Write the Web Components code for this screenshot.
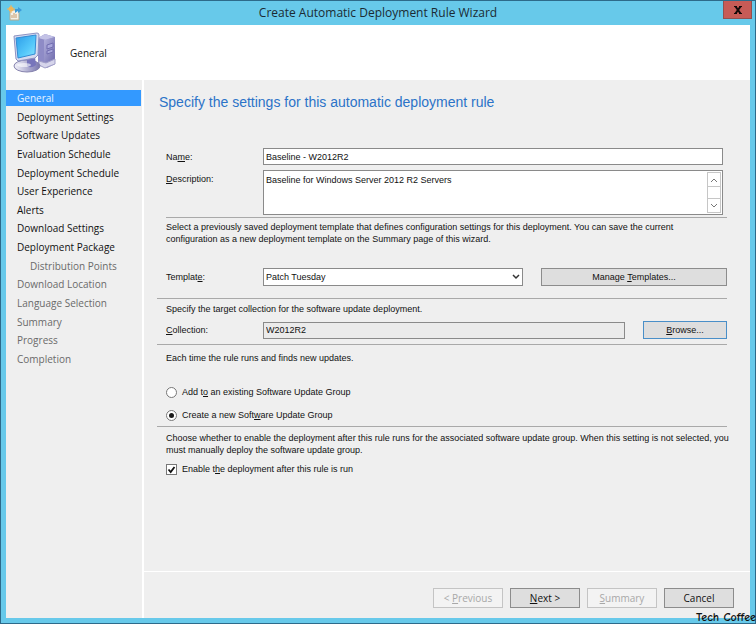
<!DOCTYPE html>
<html lang="en">
<head>
<meta charset="utf-8">
<title>Create Automatic Deployment Rule Wizard</title>
<style>
    body {
        margin: 0;
        min-height: 100vh;
        display: flex;
        font: 9px/12px "Liberation Sans", Arial, sans-serif;
        color: #111;
    }
    u {
        text-underline-offset: 1px;
    }
    p {
        margin: 0;
        white-space: nowrap;
    }
    .watermark {
        position: absolute;
        right: 0;
        bottom: 1px;
        font: 600 12px/12px "Comic Neue", Lato, sans-serif;
        color: #111;
    }
</style>
</head>
<body>

<template id="template-wizard-window">
    <style>
        :host {
            flex: 1;
            display: flex;
            flex-direction: column;
            border: 1px solid #2d6a8a;
            background: #67c9ea;
            box-sizing: border-box;
            min-width: 0;
            min-height: 100vh;
        }
        .titlebar {
            display: grid;
            grid-template-columns: 40px 1fr 40px;
            height: 24px;
        }
        .titlebar svg {
            margin: 4px 0 0 6px;
        }
        h1 {
            margin: 0;
            font: 12px/24px "Open Sans", sans-serif;
            text-align: center;
            color: #1b2b33;
        }
        .close {
            justify-self: end;
            width: 29px;
            height: 18px;
            margin-right: 3px;
            padding: 0;
            border: 1px solid #93504f;
            border-top: 0;
            background: #c75b56;
            line-height: 0;
        }
        .titlebar .close svg {
            margin: 0;
        }
        .client {
            flex: 1;
            display: flex;
            flex-direction: column;
            margin: 0 5px 5px;
            background: #efefef;
        }
        header {
            display: flex;
            align-items: center;
            gap: 14px;
            height: 55px;
            padding-left: 7px;
            background: #fff;
            font: 10px/16px "Open Sans", sans-serif;
        }
        .columns {
            flex: 1;
            display: flex;
        }
        nav {
            width: 136px;
            border-right: 2px solid #fff;
        }
        .steps {
            display: flex;
            flex-direction: column;
            justify-content: space-between;
            height: 277px;
            margin: 10px 1px 0 0;
        }
        main {
            flex: 1;
            display: flex;
            flex-direction: column;
            min-width: 0;
        }
        .page {
            flex: 1;
            padding: 12px 23px 0 22px;
        }
        h2 {
            margin: 0 0 36px -7px;
            font: 14px/20px "Liberation Sans", Arial, sans-serif;
            color: #2b73c8;
        }
        footer {
            display: flex;
            justify-content: flex-end;
            gap: 7px;
            padding: 16px 16px 10px;
            border-top: 1px solid #fff;
        }
    </style>
    <div class="titlebar">
        <svg width="16" height="16" viewBox="0 0 16 16">
            <path d="M3 5h9v10H3z" fill="#f4f1e8" stroke="#b8aa8c"/>
            <path d="M5 13v-3M7 13V8M9 13v-4" stroke="#c89b6c"/>
            <circle cx="4" cy="4" r="2.500" fill="#f2b957"/>
            <path d="M4 0v8M0 4h8" stroke="#eeb45c"/>
            <path d="M8 8V4h3V2l4 3-4 3V6" fill="#3c9bd8"/>
        </svg>
        <h1><slot name="title"></slot></h1>
        <button class="close" aria-label="Close">
            <svg width="10" height="8" viewBox="0 0 10 8">
                <path d="M1 .5h3M6 .5h3M1 7.500h3M6 7.500h3" stroke="#150909"/>
                <path d="M2.500 .5l5 7M7.500 .5l-5 7" stroke="#150909" stroke-width="2"/>
            </svg>
        </button>
    </div>
    <div class="client">
        <header>
            <svg width="43" height="42" viewBox="0 0 43 42">
                <defs>
                    <linearGradient id="screen" x1="0" y1="0" x2="1" y2="1">
                        <stop offset="0" stop-color="#2c9ce8"/>
                        <stop offset="0.600" stop-color="#55c8fa"/>
                        <stop offset="1" stop-color="#8be6ff"/>
                    </linearGradient>
                    <linearGradient id="stand" x1="0" y1="0" x2="1" y2="0">
                        <stop offset="0" stop-color="#f4f4fc"/>
                        <stop offset="1" stop-color="#7774ad"/>
                    </linearGradient>
                    <linearGradient id="tower" x1="0" y1="0" x2="1" y2="1">
                        <stop offset="0" stop-color="#b4b2de"/>
                        <stop offset="1" stop-color="#6d69ab"/>
                    </linearGradient>
                </defs>
                <path d="M25 6l7-4 10 3v27l-8 4-9-3z" fill="#8e8bc6"/>
                <path d="M25 6l7-4 10 3-9 3z" fill="#c3c2e6"/>
                <path d="M31 8l11-3v22l-11 4z" fill="url(#tower)"/>
                <path d="M34 13l6-2v4l-6 2zM34 19l6-2v3l-6 2z" fill="#a9a7dc" stroke="#716db0"/>
                <path d="M26 29l7 2 9-4v5l-10 4-6-3z" fill="#d6d5eb" stroke="#a19fc8"/>
                <ellipse cx="14" cy="34" rx="13" ry="6" fill="url(#stand)" stroke="#8582ad"/>
                <path d="M14 26l8-1 1 8q-5 4-9 1z" fill="#7775bb"/>
                <ellipse cx="11" cy="33" rx="7" ry="2" fill="#fff" opacity="0.600"/>
                <path d="M1 4L24 1q2 0 2 2l-1 20-3 3-17 3-2-2z" fill="#d5daf0" stroke="#8e93c2"/>
                <path d="M3 6l20-3-1 19-17 4z" fill="url(#screen)" stroke="#338bd3"/>
            </svg>
            <slot name="heading"></slot>
        </header>
        <div class="columns">
            <nav><div class="steps"><slot name="step"></slot></div></nav>
            <main>
                <div class="page">
                    <h2><slot name="subtitle"></slot></h2>
                    <slot></slot>
                </div>
                <footer><slot name="action"></slot></footer>
            </main>
        </div>
    </div>
</template>

<template id="template-wizard-step">
    <style>
        :host {
            display: block;
            padding-left: 11px;
            font: 10px/16px "Open Sans", sans-serif;
            white-space: nowrap;
        }
        a {
            color: #111;
            text-decoration: none;
        }
        :host([pending]) a {
            color: #6a6a6a;
        }
        :host([nested]) {
            padding-left: 24px;
        }
        :host([current]) {
            background: #3399ff;
        }
        :host([current]) a {
            color: #e9f4ff;
        }
    </style>
    <a href="#"><slot></slot></a>
</template>

<template id="template-wizard-button">
    <style>
        :host {
            display: block;
            width: 70px;
        }
        :host([size="small"]) {
            width: 84px;
        }
        :host([size="large"]) {
            width: 186px;
        }
        button {
            display: block;
            width: 100%;
            height: 20px;
            padding: 0;
            border: 1px solid #8c8c8c;
            background: #dedede;
            color: #111;
            font: 10px/16px "Open Sans", sans-serif;
        }
        :host([size]) button {
            height: 18px;
            font: inherit;
        }
        :host([focused]) button {
            border-color: #4a8fc8;
        }
        button:disabled {
            border-color: #c4c4c4;
            background: #f3f3f3;
            color: #a8a8a8;
        }
    </style>
    <button><slot></slot></button>
</template>

<template id="template-form-section">
    <style>
        :host {
            display: block;
        }
        :host([ruled]) {
            border-top: 1px solid #a9a9a9;
        }
        :host([wide]) {
            margin-left: -9px;
            padding-left: 9px;
        }
    </style>
    <slot></slot>
</template>

<template id="template-form-field">
    <style>
        :host {
            display: grid;
            grid-template-columns: 97px 1fr auto;
            align-items: center;
        }
        label {
            align-self: start;
            padding-top: 3px;
        }
        input, select, textarea {
            width: 100%;
            box-sizing: border-box;
            margin: 0;
            border: 1px solid #8a8a8a;
            border-radius: 0;
            background: #fff;
            color: inherit;
            font: inherit;
            outline: 0;
        }
        input {
            display: block;
            height: 17px;
            padding: 0 2px;
        }
        input:read-only {
            background: #ebebeb;
        }
        .select {
            display: grid;
            align-items: center;
        }
        .select > * {
            grid-area: 1 / 1;
        }
        .select svg {
            justify-self: end;
            margin-right: 3px;
            pointer-events: none;
        }
        select {
            height: 18px;
            padding: 0 2px;
            appearance: none;
        }
        .area {
            display: flex;
            height: 45px;
            box-sizing: border-box;
            border: 1px solid #8a8a8a;
            background: #fff;
        }
        textarea {
            flex: 1;
            height: 100%;
            padding: 3px 2px;
            border: 0;
            resize: none;
            overflow: hidden;
        }
        .scroll {
            display: flex;
            flex-direction: column;
            justify-content: space-between;
            width: 14px;
            margin: 1px;
            border: 1px solid #c6c6c6;
            box-sizing: border-box;
        }
        .scroll button {
            height: 14px;
            padding: 0;
            border: 0 solid #c6c6c6;
            background: #fff;
            line-height: 0;
        }
        .scroll button:first-child {
            border-bottom-width: 1px;
        }
        .scroll button:last-child {
            border-top-width: 1px;
        }
        ::slotted(wizard-button) {
            margin-left: 18px;
        }
    </style>
    <label for="control"><slot></slot></label>
    <div class="control"></div>
    <slot name="button"></slot>
</template>

<template id="template-form-option">
    <style>
        :host {
            display: flex;
            align-items: center;
            gap: 5px;
            height: 12px;
        }
        input {
            appearance: none;
            display: grid;
            place-content: center;
            width: 11px;
            height: 11px;
            box-sizing: border-box;
            margin: 0;
            border: 1px solid #777;
            background: #fff;
        }
        input[type="radio"] {
            border-radius: 50%;
        }
        input[type="radio"]:checked::before {
            content: "";
            width: 5px;
            height: 5px;
            border-radius: 50%;
            background: #1a1a1a;
        }
        .box {
            display: grid;
        }
        .box > * {
            grid-area: 1 / 1;
        }
        svg {
            display: none;
            pointer-events: none;
        }
        input[type="checkbox"]:checked + svg {
            display: block;
        }
    </style>
    <span class="box">
        <input id="control">
        <svg width="11" height="11" viewBox="0 0 11 11">
            <path d="M2.500 5.500l2.200 2.500L8.500 3" fill="none" stroke="#111" stroke-width="1.800"/>
        </svg>
    </span>
    <label for="control"><slot></slot></label>
</template>

<style>
    .identity {
        display: grid;
        gap: 5px;
        padding: 0 4px 2px 0;
    }
    .template {
        display: grid;
        gap: 23px;
        padding: 3px 0 12px;
    }
    .collection {
        display: grid;
        gap: 6px;
        padding-top: 4px;
        padding-bottom: 5px;
    }
    .group {
        display: grid;
        gap: 11px;
        padding-top: 7px;
        padding-bottom: 5px;
    }
    .group p {
        margin-bottom: 11px;
    }
    .enable {
        display: grid;
        gap: 7px;
        padding-top: 5px;
    }
</style>

<wizard-window>
    <span slot="title">Create Automatic Deployment Rule Wizard</span>
    <span slot="heading">General</span>
    <span slot="subtitle">Specify the settings for this automatic deployment rule</span>

    <wizard-step slot="step" current>General</wizard-step>
    <wizard-step slot="step">Deployment Settings</wizard-step>
    <wizard-step slot="step">Software Updates</wizard-step>
    <wizard-step slot="step">Evaluation Schedule</wizard-step>
    <wizard-step slot="step">Deployment Schedule</wizard-step>
    <wizard-step slot="step">User Experience</wizard-step>
    <wizard-step slot="step">Alerts</wizard-step>
    <wizard-step slot="step">Download Settings</wizard-step>
    <wizard-step slot="step">Deployment Package</wizard-step>
    <wizard-step slot="step" pending nested>Distribution Points</wizard-step>
    <wizard-step slot="step" pending>Download Location</wizard-step>
    <wizard-step slot="step" pending>Language Selection</wizard-step>
    <wizard-step slot="step" pending>Summary</wizard-step>
    <wizard-step slot="step" pending>Progress</wizard-step>
    <wizard-step slot="step" pending>Completion</wizard-step>

    <form-section>
        <div class="identity">
            <form-field value="Baseline - W2012R2">Na<u>m</u>e:</form-field>
            <form-field type="area" value="Baseline for Windows Server 2012 R2 Servers"><u>D</u>escription:</form-field>
        </div>
    </form-section>
    <form-section ruled>
        <div class="template">
            <p>Select a previously saved deployment template that defines configuration settings for this deployment. You can save the current<br>configuration as a new deployment template on the Summary page of this wizard.</p>
            <form-field type="select" value="Patch Tuesday">Templat<u>e</u>:
                <wizard-button slot="button" size="large">Manage <u>T</u>emplates...</wizard-button>
            </form-field>
        </div>
    </form-section>
    <form-section ruled wide>
        <div class="collection">
            <p>Specify the target collection for the software update deployment.</p>
            <form-field readonly value="W2012R2"><u>C</u>ollection:
                <wizard-button slot="button" size="small" focused><u>B</u>rowse...</wizard-button>
            </form-field>
        </div>
    </form-section>
    <form-section ruled wide>
        <div class="group">
            <p>Each time the rule runs and finds new updates.</p>
            <form-option type="radio">Add t<u>o</u> an existing Software Update Group</form-option>
            <form-option type="radio" checked>Create a new Soft<u>w</u>are Update Group</form-option>
        </div>
    </form-section>
    <form-section ruled wide>
        <div class="enable">
            <p>Choose whether to enable the deployment after this rule runs for the associated software update group. When this setting is not selected, you<br>must manually deploy the software update group.</p>
            <form-option type="checkbox" checked>Enable t<u>h</u>e deployment after this rule is run</form-option>
        </div>
    </form-section>

    <wizard-button slot="action" disabled>&lt; <u>P</u>revious</wizard-button>
    <wizard-button slot="action"><u>N</u>ext &gt;</wizard-button>
    <wizard-button slot="action" disabled><u>S</u>ummary</wizard-button>
    <wizard-button slot="action">Cancel</wizard-button>
</wizard-window>
<div class="watermark">Tech Coffee</div>

<script>
    (function() {
        class TemplateElement extends HTMLElement {
            constructor() {
                super();
                const template = document.getElementById('template-' + this.localName);
                this.attachShadow({ mode: 'open' }).appendChild(template.content.cloneNode(true));
            }
        }

        customElements.define('wizard-window', class extends TemplateElement {});
        customElements.define('wizard-step', class extends TemplateElement {});
        customElements.define('form-section', class extends TemplateElement {});

        customElements.define('wizard-button', class extends TemplateElement {
            connectedCallback() {
                this.shadowRoot.querySelector('button').disabled = this.hasAttribute('disabled');
            }
        });

        const controls = {
            text: '<input id="control" type="text">',
            area: `<div class="area">
                <textarea id="control"></textarea>
                <div class="scroll">
                    <button aria-label="Scroll up"><svg width="8" height="6" viewBox="0 0 8 6"><path d="M1 5l3-3 3 3" fill="none" stroke="#777"/></svg></button>
                    <button aria-label="Scroll down"><svg width="8" height="6" viewBox="0 0 8 6"><path d="M1 1l3 3 3-3" fill="none" stroke="#777"/></svg></button>
                </div>
            </div>`,
            select: `<div class="select">
                <select id="control"></select>
                <svg width="8" height="6" viewBox="0 0 8 6"><path d="M1 1l3 3 3-3" fill="none" stroke="#333" stroke-width="1.500"/></svg>
            </div>`
        };

        customElements.define('form-field', class extends TemplateElement {
            connectedCallback() {
                const type = this.getAttribute('type') || 'text';
                const value = this.getAttribute('value');
                this.shadowRoot.querySelector('.control').innerHTML = controls[type];
                const control = this.shadowRoot.getElementById('control');
                if (type === 'select') {
                    control.add(new Option(value));
                } else {
                    control.value = value;
                    control.readOnly = this.hasAttribute('readonly');
                }
            }
        });

        customElements.define('form-option', class extends TemplateElement {
            connectedCallback() {
                const input = this.shadowRoot.getElementById('control');
                input.type = this.getAttribute('type');
                input.checked = this.hasAttribute('checked');
                if (input.type === 'radio') {
                    input.addEventListener('change', () => {
                        for (const other of this.parentNode.querySelectorAll('form-option')) {
                            other.shadowRoot.getElementById('control').checked = other === this;
                        }
                    });
                }
            }
        });
    })();
</script>
</body>
</html>
